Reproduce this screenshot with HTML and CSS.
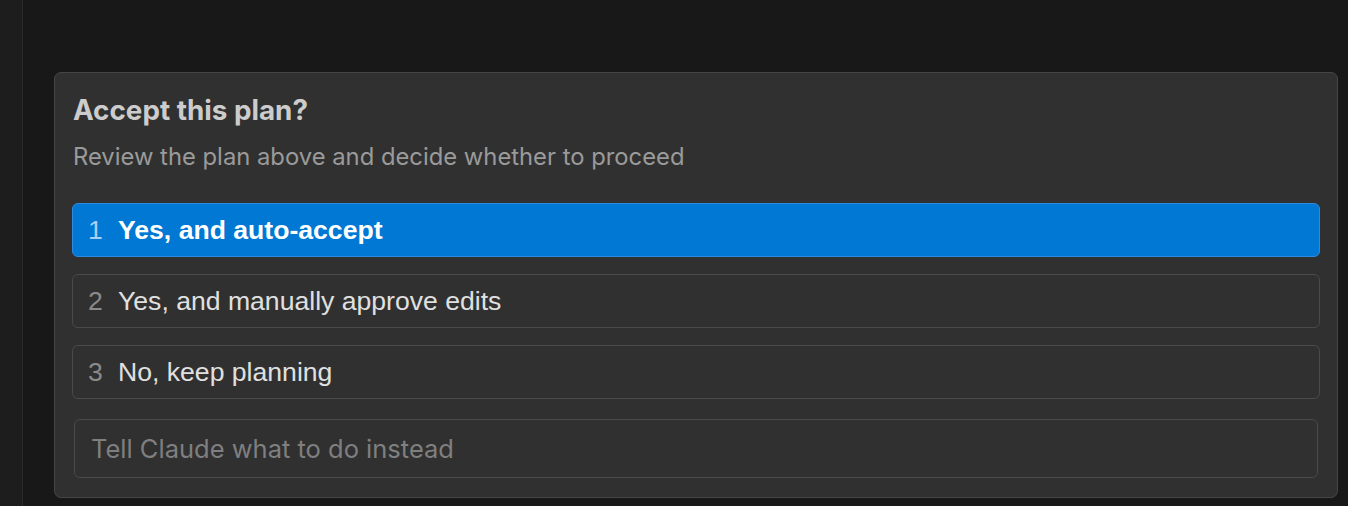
FILE: index.html
```html
<!DOCTYPE html>
<html lang="en">
<head>
    <meta charset="UTF-8">
    <title>Accept this plan?</title>
    <link rel="stylesheet" href="styles.css">
</head>
<body>
    <div class="layout">
        <div class="sidebar"></div>
        <div class="main">
            <div class="plan-card">
                <div class="plan-title">Accept this plan?</div>
                <div class="plan-subtitle">Review the plan above and decide whether to proceed</div>
                <div class="options">
                    <div class="option selected">
                        <span class="option-num">1</span>
                        <span class="option-text">Yes, and auto-accept</span>
                    </div>
                    <div class="option">
                        <span class="option-num">2</span>
                        <span class="option-text">Yes, and manually approve edits</span>
                    </div>
                    <div class="option">
                        <span class="option-num">3</span>
                        <span class="option-text">No, keep planning</span>
                    </div>
                </div>
                <input class="instead-input" type="text" placeholder="Tell Claude what to do instead">
            </div>
        </div>
    </div>
</body>
</html>
```

FILE: styles.css
```css
html, body {
    margin: 0;
    height: 100%;
    background-color: #181818;
    font-family: "Liberation Sans", Arial, sans-serif;
}
.layout {
    display: flex;
    height: 100%;
}
.sidebar {
    width: 22px;
    flex-shrink: 0;
    background-color: #1d1d1d;
    border-right: 1px solid #2b2b2b;
}
.main {
    flex: 1;
    padding: 72px 10px 0 31px;
}
.plan-card {
    background-color: #303030;
    border: 1px solid #454545;
    border-radius: 7px;
    padding: 19px 17px 19px 17px;
}
.plan-title {
    font-family: Inter, "Liberation Sans", sans-serif;
    font-weight: 700;
    font-size: 27.8px;
    line-height: 36px;
    color: #cccccc;
    padding-left: 1px;
}
.plan-subtitle {
    font-family: Inter, "Liberation Sans", sans-serif;
    font-size: 23.8px;
    line-height: 28px;
    color: #9a9a9a;
    margin-top: 15px;
    padding-left: 1px;
}
.options {
    display: flex;
    flex-direction: column;
    gap: 17px;
    margin-top: 32px;
}
.option {
    display: flex;
    align-items: center;
    height: 52px;
    border: 1px solid #4a4a4a;
    border-radius: 6px;
    padding-left: 15px;
    color: #e0e0e0;
    font-size: 26.6px;
}
.option.selected {
    background-color: #0078d4;
    border-color: #2f8be0;
    color: #ffffff;
    font-weight: 700;
}
.option-num {
    width: 30px;
    color: #8a8a8a;
    font-weight: 400;
}
.option.selected .option-num {
    color: #a9d0f2;
}
.instead-input {
    display: block;
    box-sizing: border-box;
    width: calc(100% - 4px);
    height: 59px;
    margin: 20px 2px 0 2px;
    background-color: #303030;
    border: 1px solid #4a4a4a;
    border-radius: 6px;
    padding: 0 16px;
    font-family: Inter, "Liberation Sans", sans-serif;
    font-size: 25.5px;
    color: #e0e0e0;
    outline: none;
}
.instead-input::placeholder {
    color: #7f7f7f;
}
```
